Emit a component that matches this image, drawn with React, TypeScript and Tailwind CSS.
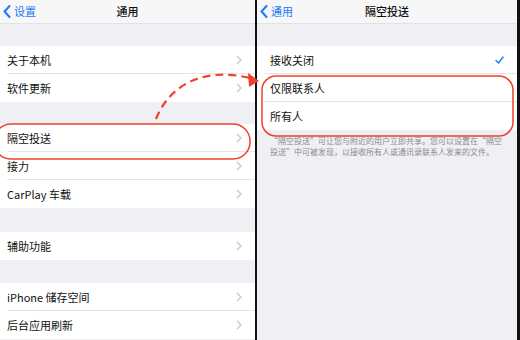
import React from 'react';

const font = { fontFamily: '"Noto Sans CJK SC", "Noto Sans", sans-serif' };

const Chevron = () => (
  <svg width="6" height="10" viewBox="0 0 6 10" className="shrink-0">
    <polyline points="1,1 5,5 1,9" fill="none" stroke="#c7c7cc" strokeWidth="1.3" />
  </svg>
);

const BackChevron = () => (
  <svg width="8" height="13" viewBox="0 0 8 13" className="shrink-0">
    <polyline points="6.5,1 1.5,6.5 6.5,12" fill="none" stroke="#1a7cf5" strokeWidth="2" strokeLinecap="round" strokeLinejoin="round" />
  </svg>
);

const Row = ({ label, last, right }: { label: string; last?: boolean; right?: React.ReactNode }) => (
  <div className="relative h-[28px] bg-white flex items-center pl-[7px] pr-[13px]">
    <span className="flex-1 text-[11px] text-[#111] leading-none">{label}</span>
    {right ?? <Chevron />}
    {!last && <div className="absolute bottom-0 left-[7px] right-0 h-px bg-[#e4e4e6]" />}
  </div>
);

const NavBar = ({ back, title }: { back: string; title: string }) => (
  <div className="relative h-[24px] bg-[#f7f7f8] border-b border-[#e2e2e6] flex items-center">
    <div className="flex items-center gap-[3px] pl-[3px]">
      <BackChevron />
      <span className="text-[11px] text-[#1a7cf5] leading-none">{back}</span>
    </div>
    <span className="absolute inset-x-0 text-center text-[11px] font-medium text-[#111] leading-none">{title}</span>
  </div>
);

const Check = () => (
  <svg width="9" height="8" viewBox="0 0 9 8" className="shrink-0">
    <polyline points="1,4.5 3.5,7 8,1" fill="none" stroke="#1a7cf5" strokeWidth="1.4" strokeLinecap="round" strokeLinejoin="round" />
  </svg>
);

export default function App() {
  return (
    <div className="relative w-[520px] h-[340px] overflow-hidden flex bg-black" style={font}>
      {/* left: 通用 */}
      <div className="w-[255px] h-full bg-[#efeff4] flex flex-col">
        <NavBar back="设置" title="通用" />
        <div className="h-[22px]" />
        <Row label="关于本机" />
        <Row label="软件更新" last />
        <div className="h-[22px]" />
        <Row label="隔空投送" />
        <Row label="接力" />
        <Row label="CarPlay 车载" last />
        <div className="h-[24px]" />
        <Row label="辅助功能" last />
        <div className="h-[23px]" />
        <Row label="iPhone 储存空间" />
        <Row label="后台应用刷新" last />
      </div>

      <div className="w-[2px] h-full bg-[#111]" />

      {/* right: 隔空投送 */}
      <div className="w-[260px] h-full bg-[#efeff4] flex flex-col">
        <NavBar back="通用" title="隔空投送" />
        <div className="h-[22px]" />
        <div className="[&>div]:pl-[13px]">
          <Row label="接收关闭" right={<Check />} />
          <Row label="仅限联系人" right={<span />} />
          <Row label="所有人" right={<span />} last />
        </div>
        <p className="px-[13px] pt-[5px] text-[8px] leading-[11px] text-[#8a8a8f]">
          “隔空投送”可让您与附近的用户立即共享。您可以设置在“隔空投送”中可被发现，以接收所有人或通讯录联系人发来的文件。
        </p>
      </div>

      <div className="w-[3px] h-full bg-[#111]" />

      {/* red annotations */}
      <svg className="absolute inset-0 pointer-events-none" width="520" height="340" viewBox="0 0 520 340">
        <rect x="-6" y="124" width="256" height="35" rx="17" fill="none" stroke="#f0412b" strokeWidth="1.5" />
        <rect x="262" y="76" width="251" height="60" rx="14" fill="none" stroke="#f0412b" strokeWidth="1.5" />
        <path d="M156 119 C168 88, 200 66, 250 78" fill="none" stroke="#f0412b" strokeWidth="2.2" strokeDasharray="8 5" />
        <polygon points="259,81 248,73 249,87" fill="#f0412b" />
      </svg>
    </div>
  );
}
